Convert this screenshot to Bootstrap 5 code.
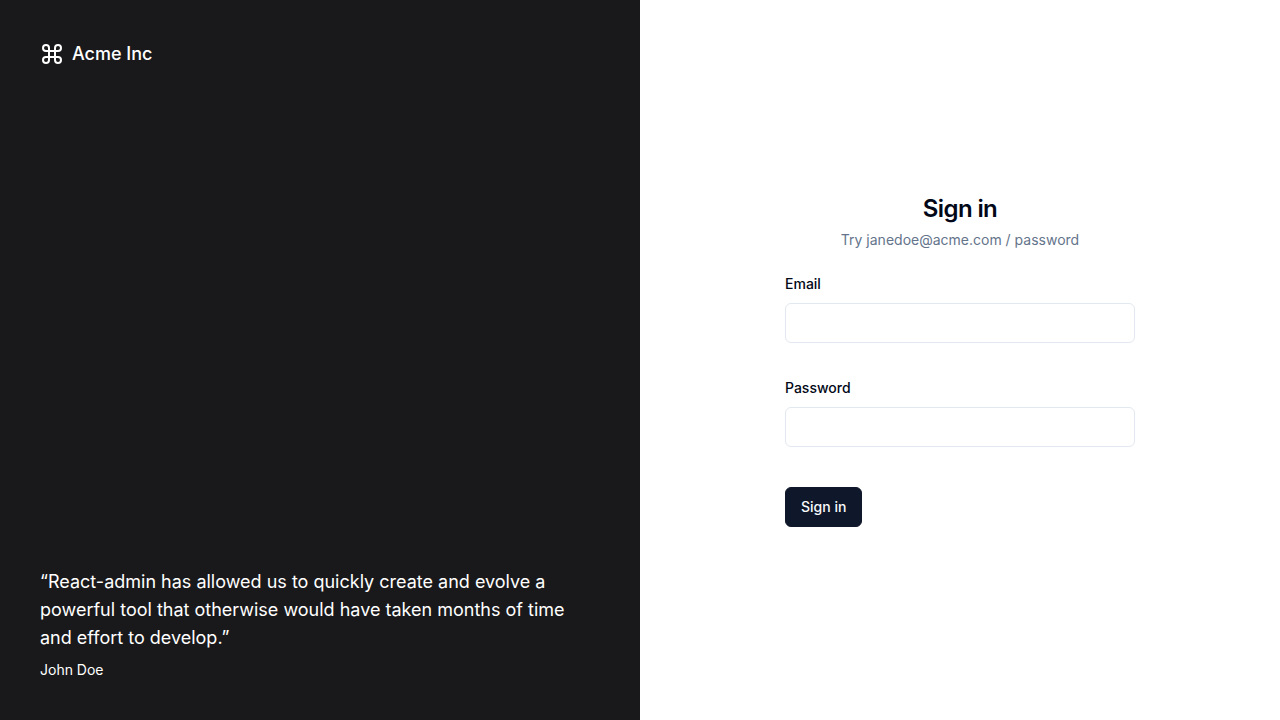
<!DOCTYPE html>
<html lang="en">
<head>
<meta charset="utf-8">
<meta name="viewport" content="width=device-width, initial-scale=1">
<title>Sign in - Acme Inc</title>
<link href="https://cdn.jsdelivr.net/npm/bootstrap@5.3.0/dist/css/bootstrap.min.css" rel="stylesheet">
<style>
  body { font-family: Inter, sans-serif; color: #020817; font-size: 14px; line-height: 20px; }
  .brand-panel { background: #19191b; color: #fff; padding: 40px; }
  .brand-name { font-size: 18px; line-height: 28px; }
  .quote-text { font-size: 18px; line-height: 28px; }
  .signin-box { width: 100%; max-width: 350px; }
  .signin-head { gap: 5px; }
  .signin-title { font-size: 24px; line-height: 32px; font-weight: 600; letter-spacing: -0.025em; }
  .signin-hint { color: #64748b; }
  .field-label { margin-bottom: 9px; line-height: 20px; font-weight: 500; }
  .field-group + .field-group { margin-top: 35px; }
  .field-input { height: 40px; border-color: #e2e8f0; border-radius: 6px; font-size: 14px; }
  .signin-btn { --bs-btn-bg: #0f172a; --bs-btn-border-color: #0f172a; --bs-btn-color: #f8fafc; --bs-btn-hover-bg: #272e3f; --bs-btn-hover-color: #f8fafc; height: 40px; margin-top: 40px; padding: 0 15px; border-radius: 6px; font-size: 14px; font-weight: 500; line-height: 20px; }
</style>
</head>
<body>
<div class="container-fluid p-0">
  <div class="row g-0 min-vh-100">
    <aside class="brand-panel col-lg-6 d-flex flex-column justify-content-between">
      <div class="brand-name d-flex align-items-center fw-medium">
        <svg class="me-2" width="24" height="24" viewBox="0 0 24 24" fill="none" stroke="currentColor" stroke-width="2" stroke-linecap="round" stroke-linejoin="round" aria-hidden="true"><path d="M15 6v12a3 3 0 1 0 3-3H6a3 3 0 1 0 3 3V6a3 3 0 1 0-3 3h12a3 3 0 1 0-3-3"/></svg>
        Acme Inc
      </div>
      <blockquote class="m-0 d-flex flex-column gap-2">
        <p class="quote-text m-0">“React-admin has allowed us to quickly create and evolve a powerful tool that otherwise would have taken months of time and effort to develop.”</p>
        <footer>John Doe</footer>
      </blockquote>
    </aside>
    <main class="col-lg-6 d-flex align-items-center justify-content-center">
      <div class="signin-box d-flex flex-column gap-4">
        <div class="signin-head d-flex flex-column text-center">
          <h1 class="signin-title m-0">Sign in</h1>
          <p class="signin-hint m-0">Try janedoe@acme.com / password</p>
        </div>
        <form>
          <div class="field-group">
            <label class="field-label d-block" for="email">Email</label>
            <input class="field-input form-control" type="email" id="email">
          </div>
          <div class="field-group">
            <label class="field-label d-block" for="password">Password</label>
            <input class="field-input form-control" type="password" id="password">
          </div>
          <button class="signin-btn btn" type="submit">Sign in</button>
        </form>
      </div>
    </main>
  </div>
</div>
<script src="https://cdn.jsdelivr.net/npm/bootstrap@5.3.0/dist/js/bootstrap.bundle.min.js"></script>
</body>
</html>
